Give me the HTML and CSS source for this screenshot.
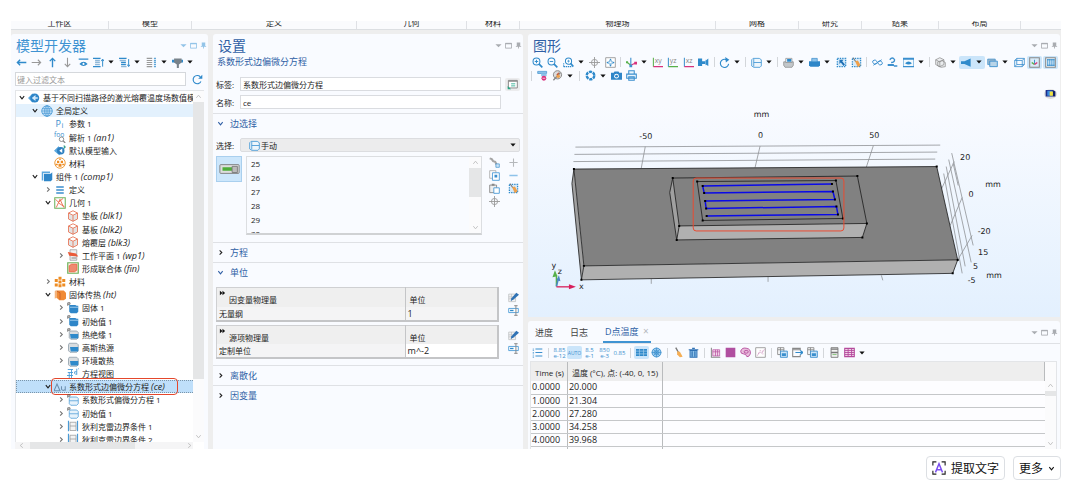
FILE: index.html
```html
<!DOCTYPE html>
<html lang="zh-CN">
<head>
  <meta charset="UTF-8" />
  <meta name="viewport" content="width=device-width, initial-scale=1.0" />
  <title>模型开发器</title>
  <link rel="stylesheet" href="styles.css">
</head>
<body>
  <svg class="sprite" aria-hidden="true">
    <!-- window and navigation glyphs -->
    <symbol id="i-min" viewBox="0 0 16 16"><path d="M1 5h14l-7 7z" fill="currentColor"/></symbol>
    <symbol id="i-max" viewBox="0 0 16 16"><path d="M1 3h14v11H1z" fill="none" stroke="currentColor" stroke-width="2"/><path d="M1 2h14v3H1z" fill="currentColor"/></symbol>
    <symbol id="i-pin" viewBox="0 0 16 16"><path d="M4 1h8v8h2v2H9v4H7v-4H2V9h2z" fill="currentColor"/></symbol>
    <symbol id="i-caret" viewBox="0 0 16 16"><path d="M1 4h14l-7 8z" fill="#111"/></symbol>
    <symbol id="i-open" viewBox="0 0 16 16"><path d="M3 5l5 6 5-6" fill="none" stroke="currentColor" stroke-width="2.5"/></symbol>
    <symbol id="i-shut" viewBox="0 0 16 16"><path d="M6 3l5 5-5 5" fill="none" stroke="currentColor" stroke-width="2.5"/></symbol>
    <symbol id="i-up" viewBox="0 0 16 16"><path d="M3 11l5-6 5 6" fill="none" stroke="currentColor" stroke-width="2"/></symbol>
    <symbol id="i-left" viewBox="0 0 16 16"><path d="M2 8h13M6 4L2 8l4 4" fill="none" stroke="#2f8acb" stroke-width="2"/></symbol>
    <symbol id="i-right" viewBox="0 0 16 16"><path d="M1 8h13M10 4l4 4-4 4" fill="none" stroke="#999" stroke-width="1.6"/></symbol>
    <symbol id="i-north" viewBox="0 0 16 16"><path d="M8 2v13M4 6l4-4 4 4" fill="none" stroke="#2f8acb" stroke-width="2"/></symbol>
    <symbol id="i-south" viewBox="0 0 16 16"><path d="M8 1v13M4 10l4 4 4-4" fill="none" stroke="#999" stroke-width="1.6"/></symbol>
    <symbol id="i-show" viewBox="0 0 16 16"><path d="M1 3h14" stroke="#2f8acb" stroke-width="2"/><path d="M2 10q6-6 12 0-6 6-12 0z" fill="#2f8acb"/><circle cx="8" cy="10" r="1.5" fill="#fff"/></symbol>
    <symbol id="i-listup" viewBox="0 0 16 16"><path d="M0 2h11M0 14h11" stroke="#2f8acb" stroke-width="2"/><path d="M3 5h7M3 8h7M3 11h7" stroke="#8fb8d8" stroke-width="2"/><path d="M14 14V4M12 6l2-3 2 3" fill="none" stroke="#2f8acb" stroke-width="1.4"/></symbol>
    <symbol id="i-listdown" viewBox="0 0 16 16"><path d="M0 2h11M3 8h7M3 11h7" stroke="#2f8acb" stroke-width="2"/><path d="M1 5h9M3 14h8" stroke="#8fb8d8" stroke-width="2"/><path d="M14 3v10M12 11l2 3 2-3" fill="none" stroke="#2f8acb" stroke-width="1.4"/></symbol>
    <symbol id="i-cols" viewBox="0 0 16 16"><path d="M1 2h8M1 5h8M1 8h8M1 11h8M1 14h8" stroke="#999" stroke-width="1.6"/><path d="M13 1v14" stroke="#5fa6d8" stroke-width="3" stroke-dasharray="2 1"/></symbol>
    <symbol id="i-funnel" viewBox="0 0 16 16"><path d="M0 6h16" stroke="#2f8acb" stroke-width="4"/><path d="M3 2h11v6l-4 3v5H7v-5L3 8z" fill="#78828a"/></symbol>
    <symbol id="i-refresh" viewBox="0 0 16 16"><path d="M13 11a6 6 0 1 1-1-7" fill="none" stroke="#2f8acb" stroke-width="1.7"/><path d="M15 1v6H9z" fill="#2f8acb"/></symbol>
    <!-- tree glyphs -->
    <symbol id="t-root" viewBox="0 0 16 16"><path d="M0 8l6-6 2 2-4 4 4 4-2 2z" fill="#5aa7de"/><circle cx="9" cy="8" r="6" fill="#2f86c8"/><path d="M5 8l5-4v3h3v2h-3v3z" fill="#d5eafa"/></symbol>
    <symbol id="t-globe" viewBox="0 0 16 16"><g fill="none" stroke="#4b9bd6" stroke-width="1.2"><circle cx="8" cy="8" r="7"/><ellipse cx="8" cy="8" rx="3" ry="7"/><path d="M1 8h14M2 5h12M2 11h12M8 1v14"/></g></symbol>
    <symbol id="t-pi" viewBox="0 0 16 16"><text x="2" y="12" font-size="12" fill="#3b8fce">P</text><text x="10" y="13" font-size="10" fill="#3b8fce">i</text></symbol>
    <symbol id="t-foo" viewBox="0 0 16 16"><text x="0" y="8" font-size="9" fill="#3b8fce">foo</text><circle cx="10" cy="11" r="3" fill="#fff" stroke="#888" stroke-width="1.2"/><path d="M12 13l3 3" stroke="#888" stroke-width="1.6"/></symbol>
    <symbol id="t-input" viewBox="0 0 16 16"><path d="M0 9l6-6 3 3-3 3 4 3-3 3z" fill="#5aa7de"/><circle cx="9" cy="9" r="5" fill="#2f80c0"/><path d="M10 1h3v6l3-3-3-3" fill="#3ba08c"/><path d="M7 9l4-3v6z" fill="#fff"/></symbol>
    <symbol id="t-matglobe" viewBox="0 0 16 16"><circle cx="8" cy="8" r="7" fill="#fff" stroke="#ee9a3a" stroke-width="1.3"/><path d="M4 5h3v3H4zM9 5h3v3H9zM6 9h4v4H6zM2 9h3v2H2zM11 9h3v2h-3zM7 2h2v2H7z" fill="#ee8c22"/></symbol>
    <symbol id="t-comp" viewBox="0 0 16 16"><path d="M1 2h11v2H3v10H1z" fill="#5aa7de"/><path d="M4 5h9l2-2v10l-2 2H4z" fill="#2f86c8"/></symbol>
    <symbol id="t-def" viewBox="0 0 16 16"><path d="M3 4h10M3 8h10M3 12h10" stroke="#3b8fce" stroke-width="2.2"/></symbol>
    <symbol id="t-geom" viewBox="0 0 16 16"><path d="M1 1h14v14H1z" fill="#fff" stroke="#6db35c" stroke-width="1.4"/><path d="M2 3l4 4 6-5M8 3l-5 11M8 3l5 11M6 8l8 5" fill="none" stroke="#ea6a4b" stroke-width="1.2"/></symbol>
    <symbol id="t-block" viewBox="0 0 16 16"><path d="M2 4l6 3 6-3v8l-6 4-6-4z" fill="#e3e3e3"/><path d="M2 4l6-3 6 3v8l-6 3-6-3zM2 4l6 3 6-3M8 7v8" fill="none" stroke="#e8795c" stroke-width="1.2"/></symbol>
    <symbol id="t-plane" viewBox="0 0 16 16"><path d="M4 1h9v14H4z" fill="#eee" stroke="#999"/><path d="M1 4l11 2 3 4-12-1z" fill="#ea5a38"/><path d="M6 12h6" stroke="#666"/></symbol>
    <symbol id="t-fin" viewBox="0 0 16 16"><path d="M1 1h14v14H1z" fill="#ffe9e0" stroke="#6db35c" stroke-width="1.6"/><path d="M3 5l3-2h7v8l-3 2H3z" fill="#ef8a70" stroke="#ea5a38"/></symbol>
    <symbol id="t-mat" viewBox="0 0 16 16"><path d="M6 1h4v4H6zM1 4h4v4H1zM11 4h4v4h-4zM6 6h4v4H6zM1 10h4v4H1zM11 10h4v4h-4zM6 11h4v4H6z" fill="#ee8c22"/></symbol>
    <symbol id="t-heat" viewBox="0 0 16 16"><path d="M1 3q2-3 4 0v10q-2-2-4 0z" fill="#f4b27a"/><path d="M4 2h9l3 3v8l-3 2H7L4 12z" fill="#f08a35"/><path d="M4 3l4 2v9" fill="none" stroke="#c2592a"/></symbol>
    <symbol id="t-dom" viewBox="0 0 16 16"><path d="M3 4h8l2 1h2v8l-2 2H5l-2-2z" fill="#2f86c8"/><path d="M4 7h11" stroke="#bcdcf3"/><path d="M1 5V1h3v2H1" fill="none" stroke="#555"/></symbol>
    <symbol id="t-bnd" viewBox="0 0 16 16"><path d="M3 3h10l2 2v8l-2 2H4l-2-2V5z" fill="#d9dde0" stroke="#8a9aa6"/><path d="M4 8h11v6H5z" fill="#2f8acb"/></symbol>
    <symbol id="t-dbnd" viewBox="0 0 16 16"><path d="M4 4h9l2 2v7l-2 2H5l-2-2V6z" fill="#d9dde0" stroke="#8a9aa6"/><path d="M4 8h11v6H5z" fill="#2f8acb"/><path d="M1 5V1h3v2H1" fill="none" stroke="#555"/></symbol>
    <symbol id="t-eq" viewBox="0 0 16 16"><path d="M1 2h7M1 6h7M0 10h8M1 14h7M6 2v12M3 6v8" stroke="#4b9bd6" stroke-width="1.2" fill="none"/><path d="M13 1v8M13 5q-4-1-3 2 1 2 3 1M15 1h1" stroke="#4b9bd6" stroke-width="1.2" fill="none"/></symbol>
    <symbol id="t-pde" viewBox="0 0 16 16"><path d="M0 13L4 4l4 9z" fill="none" stroke="#6c8fae" stroke-width="1.4"/><path d="M10 7v4q2 3 5 0V7v6" fill="none" stroke="#6c8fae" stroke-width="1.4"/></symbol>
    <symbol id="t-coef" viewBox="0 0 16 16"><path d="M4 4h9l2 2v7l-2 2H5l-2-2V6zM3 9h12" fill="#e6f2fb" stroke="#4b9bd6"/><path d="M1 5V1h3v2H1" fill="none" stroke="#555"/></symbol>
    <symbol id="t-dir" viewBox="0 0 16 16"><path d="M4 3h8v11H4zM4 8h8" fill="#f3f3f3" stroke="#999"/><path d="M2 1v14M14 1v14" stroke="#4b9bd6" stroke-width="1.6"/></symbol>
    <!-- settings glyphs -->
    <symbol id="s-note" viewBox="0 0 16 16"><path d="M2 2h13v11H2z" fill="#fff" stroke="#888" stroke-width="1.4"/><path d="M2 3h13" stroke="#888" stroke-width="2"/><path d="M6 7h6M6 10h6" stroke="#3fb59b" stroke-width="1.4"/><path d="M1 15v-5l5 5z" fill="#27a585"/></symbol>
    <symbol id="s-edge" viewBox="0 0 16 16"><path d="M3 2h9l3 2v9l-2 2H4l-3-2V4zM4 3v11M4 8h11" fill="#eef6fc" stroke="#4b9bd6" stroke-width="1.3"/></symbol>
    <symbol id="s-switch" viewBox="0 0 24 16"><rect x="1" y="3" width="22" height="10" rx="1" fill="#ddd" stroke="#777"/><path d="M4 6h11v4H4z" fill="#4ead3a"/><path d="M15 5h6v7h-6z" fill="#bbb" stroke="#777"/></symbol>
    <symbol id="s-link" viewBox="0 0 16 16"><path d="M1 2l3 1 2 3 3 1 2 4" stroke="#a5a5a5" stroke-width="3" fill="none"/><path d="M10 10h5v5h-5z" fill="#cfe6f7" stroke="#3b8fce"/></symbol>
    <symbol id="s-plus" viewBox="0 0 16 16"><path d="M8 2v12M2 8h12" stroke="#b5b8bb" stroke-width="1.6"/></symbol>
    <symbol id="s-minus" viewBox="0 0 16 16"><path d="M2 8h12" stroke="#8fc3ea" stroke-width="2.4"/></symbol>
    <symbol id="s-copy" viewBox="0 0 16 16"><path d="M1 1h9v11H1z" fill="#fff" stroke="#999"/><path d="M5 4h10v11H5z" fill="#fff" stroke="#4b9bd6" stroke-width="1.3"/><path d="M8 7h4v4H8z" fill="#3b8fce"/></symbol>
    <symbol id="s-paste" viewBox="0 0 16 16"><path d="M1 3h10v11H1z" fill="#eee" stroke="#888" stroke-width="1.3"/><path d="M4 1h4v3H4z" fill="#888"/><path d="M7 7h8v8H7z" fill="#fff" stroke="#4b9bd6" stroke-width="1.3"/></symbol>
    <symbol id="s-brush" viewBox="0 0 16 16"><path d="M2 2h12v12H2z" fill="#d5eafa" stroke="#2f8acb" stroke-width="1.8" stroke-dasharray="2 1.5"/><path d="M3 1l4 6" stroke="#777" stroke-width="1.6"/><path d="M6 6l4-1 4 7-4 3z" fill="#f0a04a"/></symbol>
    <symbol id="s-target" viewBox="0 0 16 16"><path d="M8 0v16M0 8h16" stroke="#999" stroke-width="1.3"/><circle cx="8" cy="8" r="4.500" fill="none" stroke="#999" stroke-width="1.3"/></symbol>
    <symbol id="s-pen" viewBox="0 0 16 16"><path d="M1 3h10v11H1zM1 7h10M1 10h10M5 3v11" fill="#f3f3f3" stroke="#b9bcbf"/><path d="M4 13l1-4 7-8 4 3-8 7z" fill="#2f72b5"/></symbol>
    <symbol id="s-field" viewBox="0 0 16 16"><path d="M1 5h14v6H1z" fill="#fff" stroke="#4b9bd6" stroke-width="1.3"/><path d="M3 7h5v2H3z" fill="#2f8acb"/><path d="M9 1h5M9 15h5M11.500 1v14" stroke="#888" stroke-width="1.4"/></symbol>
    <symbol id="s-ff" viewBox="0 0 16 16"><path d="M1 2l7 6-7 6zM8 2l7 6-7 6z" fill="#111"/></symbol>
    <!-- graphics glyphs -->
    <symbol id="g-zin" viewBox="0 0 16 16"><circle cx="6.500" cy="6.500" r="5" fill="none" stroke="#2f8acb" stroke-width="1.500"/><path d="M10 10l5 5" stroke="#2f8acb" stroke-width="2.400"/><path d="M4 6.500h5M6.500 4v5" stroke="#2f8acb" stroke-width="1.400"/></symbol>
    <symbol id="g-zout" viewBox="0 0 16 16"><circle cx="6.500" cy="6.500" r="5" fill="none" stroke="#2f8acb" stroke-width="1.500"/><path d="M10 10l5 5" stroke="#2f8acb" stroke-width="2.400"/><path d="M4 6.500h5" stroke="#2f8acb" stroke-width="1.400"/></symbol>
    <symbol id="g-zbox" viewBox="0 0 16 16"><path d="M1 14V8M1 14h11" stroke="#2f8acb" stroke-dasharray="2 1" stroke-width="1.500"/><circle cx="8" cy="6" r="4.500" fill="#fff" stroke="#2f8acb" stroke-width="1.500"/><path d="M11 9l4 5" stroke="#2f8acb" stroke-width="2.400"/><path d="M6 6h4M8 4v4" stroke="#2f8acb"/></symbol>
    <symbol id="g-fit" viewBox="0 0 16 16"><path d="M1 1h14v14H1z" fill="#fff" stroke="#999" stroke-width="1.300"/><path d="M6 5l2-3 2 3zM6 11l2 3 2-3zM5 6L2 8l3 2zM11 6l3 2-3 2z" fill="#2f8acb"/><path d="M6 6h4v4H6z" fill="none" stroke="#2f8acb" stroke-dasharray="2 1"/></symbol>
    <symbol id="g-axes" viewBox="0 0 16 16"><path d="M7 11V1" stroke="#3b8fce" stroke-width="1.600"/><path d="M7 12L2 8" stroke="#57b04a" stroke-width="1.600"/><path d="M7 12l6-3" stroke="#d9327c" stroke-width="1.600"/><path d="M12 7h4v4h-4z" fill="#d9327c"/><path d="M0 6h3v3H0z" fill="#57b04a"/><path d="M5 11h4v4H5z" fill="#3b8fce"/></symbol>
    <symbol id="g-xy" viewBox="0 0 16 16"><path d="M2 1v13" stroke="#57b04a" stroke-width="1.500"/><path d="M2 14h14" stroke="#d9327c" stroke-width="1.500"/><text x="4" y="9" font-size="10" fill="#888">xy</text></symbol>
    <symbol id="g-yz" viewBox="0 0 16 16"><path d="M2 1v13" stroke="#3b8fce" stroke-width="1.500"/><path d="M2 14h14" stroke="#57b04a" stroke-width="1.500"/><text x="4" y="9" font-size="10" fill="#888">yz</text></symbol>
    <symbol id="g-xz" viewBox="0 0 16 16"><path d="M2 1v13" stroke="#3b8fce" stroke-width="1.500"/><path d="M2 14h14" stroke="#d9327c" stroke-width="1.500"/><text x="4" y="9" font-size="10" fill="#888">xz</text></symbol>
    <symbol id="g-mirror" viewBox="0 0 16 16"><path d="M0 2h6v4h4l5-4v11l-5-3H6v3H0z" fill="#2f8acb"/><path d="M11 4v8" stroke="#9cc9ec"/></symbol>
    <symbol id="g-rot" viewBox="0 0 16 16"><path d="M11 4a6 6 0 1 0 3 6" fill="none" stroke="#2f8acb" stroke-width="1.600"/><path d="M9 0l6 4-5 4z" fill="#2f8acb"/></symbol>
    <symbol id="g-hide" viewBox="0 0 16 16"><path d="M1 7h14v5l-2 3H3l-2-3z" fill="#c3c7ca" stroke="#888"/><path d="M4 2h9v6H4z" fill="#eef6fc" stroke="#888"/><path d="M6 3h6v4H6z" fill="#2f8acb"/></symbol>
    <symbol id="g-show" viewBox="0 0 16 16"><path d="M0 6h16v6l-2 2H2l-2-2z" fill="#2f86c8"/><path d="M4 2h8v5H4z" fill="#8fc3ea" stroke="#2f86c8"/></symbol>
    <symbol id="g-sel" viewBox="0 0 16 16"><path d="M2 2h12v12H2z" fill="#d5eafa" stroke="#2f8acb" stroke-width="2" stroke-dasharray="2 1.500"/><path d="M5 4h6L9 6l4 5-2 2-4-5-2 2z" fill="#1f70b5"/></symbol>
    <symbol id="g-chain" viewBox="0 0 16 16"><path d="M1 6q4-4 7 2t7 2M1 6q0 5 5 4l4-4q5-1 5 4M2 12L14 4" fill="none" stroke="#3b8fce" stroke-width="1.400"/></symbol>
    <symbol id="g-person" viewBox="0 0 16 16"><path d="M4 4q4-5 7 0 0 4-5 4" fill="none" stroke="#3b8fce" stroke-width="2"/><path d="M1 10h9v3H1zM10 12h5v2h-5" fill="#3b8fce"/></symbol>
    <symbol id="g-eyebox" viewBox="0 0 16 16"><path d="M0 2h16v12H0z" fill="#f3f9fd" stroke="#3b8fce" stroke-width="1.500"/><path d="M0 3h16" stroke="#3b8fce" stroke-width="2"/><path d="M3 9q5-5 10 0-5 4-10 0z" fill="#2f8acb"/></symbol>
    <symbol id="g-trans" viewBox="0 0 16 16"><path d="M1 4l6-3 6 3v7l-6 3-6-3zM1 4l6 3 6-3M7 7v7M4 7l6-2 5 3v6l-6 1-5-2z" fill="#eaecee" stroke="#888"/></symbol>
    <symbol id="g-light" viewBox="0 0 16 16"><path d="M0 6h5l9-4v12l-9-4H0z" fill="#2f8acb"/></symbol>
    <symbol id="g-scene" viewBox="0 0 16 16"><path d="M1 3h11v8H1z" fill="#9cb8cc" stroke="#3b8fce"/><path d="M4 6h11v8H4z" fill="#b8d4e8" stroke="#3b8fce" stroke-width="1.300"/></symbol>
    <symbol id="g-wire" viewBox="0 0 16 16"><path d="M1 5h11v9H1zM4 2h11v9H4zM1 5l3-3M12 5l3-3M1 14l3-3M12 14l3-3" fill="none" stroke="#3b8fce" stroke-width="1.200"/></symbol>
    <symbol id="g-axbox" viewBox="0 0 16 16"><path d="M1 1h14v14H1z" fill="#d9ebf8" stroke="#888" stroke-width="1.500"/><path d="M8 10V4" stroke="#3b8fce" stroke-width="1.400"/><path d="M8 11L4 8" stroke="#57b04a" stroke-width="2"/><path d="M8 11l4-3" stroke="#d9327c" stroke-width="2"/></symbol>
    <symbol id="g-gridbox" viewBox="0 0 16 16"><path d="M1 1h14v14H1z" fill="#eaf5fd" stroke="#888" stroke-width="1.500"/><path d="M4 3v10M7 3v10M10 3v10M13 3v10M3 4h11M3 12h11" stroke="#2f8acb" stroke-width="1.300"/></symbol>
    <symbol id="g-clip" viewBox="0 0 16 16"><path d="M1 2h13v3H1z" fill="#8fc3ea" stroke="#3b8fce"/><path d="M6 5h8v4H6z" fill="#8fc3ea"/><circle cx="10" cy="12" r="3.500" fill="#d9327c"/><path d="M8 12h4" stroke="#fff"/></symbol>
    <symbol id="g-palette" viewBox="0 0 16 16"><circle cx="8" cy="7" r="6" fill="#ddd" stroke="#888" stroke-width="1.400"/><path d="M2 15L12 4" stroke="#888" stroke-width="2"/><circle cx="9" cy="9" r="2.500" fill="#f0a04a"/><path d="M7 7l3-3" stroke="#c5401f" stroke-width="1.500"/></symbol>
    <symbol id="g-shutter" viewBox="0 0 16 16"><circle cx="8" cy="8" r="5.500" fill="none" stroke="#2f8acb" stroke-width="3.500" stroke-dasharray="4.500 1.250"/></symbol>
    <symbol id="g-camera" viewBox="0 0 16 16"><path d="M0 4h4l1-2h6l1 2h4v10H0z" fill="#2f86c8"/><circle cx="8" cy="9" r="3.400" fill="#fff"/><circle cx="8" cy="9" r="2" fill="#2f86c8"/></symbol>
    <symbol id="g-print" viewBox="0 0 16 16"><path d="M4 1h8v5H4zM1 6h14v6H1zM4 10h8v5H4z" fill="#eaf5fd" stroke="#3b8fce" stroke-width="1.500"/></symbol>
    <symbol id="g-cube" viewBox="0 0 16 16"><ellipse cx="8" cy="9" rx="8" ry="6" fill="#ddd"/><path d="M2 4h9v8H2z" fill="#1c2e8c"/><path d="M4 5h6v6H4z" fill="#3b8be0"/><path d="M7 6h5v5H7z" fill="#f0e040"/><path d="M11 4l3 2v6h-3z" fill="#10206a"/></symbol>
    <!-- table glyphs -->
    <symbol id="r-list" viewBox="0 0 16 16"><path d="M5 3h10M5 8h10M5 13h10" stroke="#3b8fce" stroke-width="1.500"/><path d="M1 3h2M1 5h2M1 8h2M1 10h2M1 13h2M1 15h2" stroke="#3b8fce"/></symbol>
    <symbol id="r-table" viewBox="0 0 16 16"><path d="M0 3h16v10H0z" fill="#2f8acb"/><path d="M0 6h16M0 10h16M5 3v10M11 3v10" stroke="#a9d0ee"/></symbol>
    <symbol id="r-wheel" viewBox="0 0 16 16"><circle cx="8" cy="8" r="6.500" fill="#9ccbee" stroke="#3b8fce" stroke-width="1.300"/><path d="M8 1v14M1 8h14M3 3l10 10M13 3L3 13" stroke="#3b8fce"/><circle cx="8" cy="8" r="3" fill="none" stroke="#3b8fce"/></symbol>
    <symbol id="r-broom" viewBox="0 0 16 16"><path d="M4 1l4 7" stroke="#777" stroke-width="2"/><path d="M6 6l4 1 4 7-4 1-4-4z" fill="#f5ae55"/></symbol>
    <symbol id="r-bin" viewBox="0 0 16 16"><path d="M3 5h10v10H3z" fill="#8fc3ea" stroke="#2f72b5" stroke-width="1.500"/><path d="M1 4h14M6 2h4M6 6v8M10 6v8" stroke="#2f72b5" stroke-width="1.800"/></symbol>
    <symbol id="r-plot" viewBox="0 0 16 16"><path d="M2 1v14h13" stroke="#888" stroke-width="1.500" fill="none"/><path d="M4 4h10v9H4z" fill="#f2d6ea" stroke="#b54a9c"/><path d="M4 7h10M8 4v9M11 4v9" stroke="#b54a9c"/></symbol>
    <symbol id="r-fill" viewBox="0 0 16 16"><path d="M1 1h14v14H1z" fill="#b04fa0"/></symbol>
    <symbol id="r-contour" viewBox="0 0 16 16"><path d="M1 6q2-6 9-4 6 1 5 8-2 5-5 4-1-4-5-4-4 0-4-4z" fill="#e9bedd" stroke="#b54a9c" stroke-width="1.300"/><ellipse cx="9" cy="7" rx="3" ry="2" fill="none" stroke="#b54a9c" stroke-width="1.300"/></symbol>
    <symbol id="r-chart" viewBox="0 0 16 16"><path d="M1 1h14v14H1z" fill="#fff" stroke="#999" stroke-width="1.300"/><path d="M3 13l4-6 3 2 4-6" fill="none" stroke="#d3a0c8"/><path d="M7 5h1M10 6h1M11 10h1M5 9h1" stroke="#b54a9c"/></symbol>
    <symbol id="r-copy" viewBox="0 0 16 16"><path d="M1 1h9v10H1zM1 4h9M5 1v10" fill="#fff" stroke="#888" stroke-width="1.300"/><path d="M5 6h10v9H5z" fill="#cfe6f7" stroke="#3b8fce" stroke-width="1.300"/><path d="M7 9h6v4H7z" fill="#3b8fce"/></symbol>
    <symbol id="r-export" viewBox="0 0 16 16"><path d="M12 5V2H1v12h11v-3M1 4h11" fill="none" stroke="#888" stroke-width="1.500"/><path d="M5 8h10M12 5l4 3-4 3" fill="none" stroke="#2f8acb" stroke-width="1.600"/></symbol>
    <symbol id="r-doc" viewBox="0 0 16 16"><path d="M3 1h10v14H3z" fill="#f3f3f3" stroke="#777" stroke-width="1.300"/><path d="M3 3h10M3 8h10" stroke="#777" stroke-width="2"/><path d="M5 11h6" stroke="#57b04a"/></symbol>
    <symbol id="r-grid" viewBox="0 0 16 16"><path d="M1 2h14v12H1z" fill="#f2d6ea" stroke="#b54a9c" stroke-width="1.500"/><path d="M1 5h14M1 8h14M1 11h14M6 2v12M11 2v12" stroke="#b54a9c" stroke-width="1.300"/></symbol>
    <symbol id="b-scan" viewBox="0 0 16 16"><path d="M5 1H1v4M11 1h4v4M5 15H1v-4M11 15h4v-4" fill="none" stroke="#222" stroke-width="1.300"/><path d="M4 13L8 3l4 10M5.500 10h5" fill="none" stroke="#7a4df0" stroke-width="1.600"/></symbol>
  </svg>

  <div class="app">
    <div class="ribbon">
      <span>工作区</span><span>模型</span><span>定义</span><span>几何</span><span>材料</span><span>物理场</span><span>网格</span><span>研究</span><span>结果</span><span>布局</span><span></span>
    </div>

    <div class="workspace">
      <!-- model tree -->
      <section class="panel builder">
        <header class="panel-head">
          <h2>模型开发器</h2>
          <div class="win"><svg><use href="#i-min"/></svg><svg><use href="#i-max"/></svg><svg><use href="#i-pin"/></svg></div>
        </header>
        <div class="toolbar builder-bar">
          <button class="tb" aria-label="后退"><svg><use href="#i-left"/></svg></button>
          <button class="tb" aria-label="前进"><svg><use href="#i-right"/></svg></button>
          <button class="tb" aria-label="上移"><svg><use href="#i-north"/></svg></button>
          <button class="tb" aria-label="下移"><svg><use href="#i-south"/></svg></button>
          <button class="tb" aria-label="显示"><svg><use href="#i-show"/></svg></button>
          <button class="tb menu" aria-label="折叠"><svg><use href="#i-listup"/></svg><svg class="caret"><use href="#i-caret"/></svg></button>
          <button class="tb menu" aria-label="展开"><svg><use href="#i-listdown"/></svg><svg class="caret"><use href="#i-caret"/></svg></button>
          <button class="tb menu" aria-label="列"><svg><use href="#i-cols"/></svg><svg class="caret"><use href="#i-caret"/></svg></button>
          <button class="tb menu" aria-label="筛选"><svg><use href="#i-funnel"/></svg><svg class="caret"><use href="#i-caret"/></svg></button>
        </div>
        <div class="filter">
          <input type="text" placeholder="键入过滤文本" aria-label="键入过滤文本">
          <button class="tb" aria-label="刷新"><svg><use href="#i-refresh"/></svg></button>
        </div>
        <div class="tree-box">
          <div class="tree-view">
            <ul class="tree">
              <li class="l0"><svg class="chev"><use href="#i-open"/></svg><svg><use href="#t-root"/></svg><span>基于不同扫描路径的激光熔覆温度场数值模</span></li>
              <li class="l1 hover"><svg class="chev"><use href="#i-open"/></svg><svg><use href="#t-globe"/></svg><span>全局定义</span></li>
              <li class="l2"><i class="chev"></i><svg><use href="#t-pi"/></svg><span>参数 1</span></li>
              <li class="l2"><i class="chev"></i><svg><use href="#t-foo"/></svg><span>解析 1 <em>(an1)</em></span></li>
              <li class="l2"><i class="chev"></i><svg><use href="#t-input"/></svg><span>默认模型输入</span></li>
              <li class="l2"><i class="chev"></i><svg><use href="#t-matglobe"/></svg><span>材料</span></li>
              <li class="l1"><svg class="chev"><use href="#i-open"/></svg><svg><use href="#t-comp"/></svg><span>组件 1 <em>(comp1)</em></span></li>
              <li class="l2"><svg class="chev shut"><use href="#i-shut"/></svg><svg><use href="#t-def"/></svg><span>定义</span></li>
              <li class="l2"><svg class="chev"><use href="#i-open"/></svg><svg><use href="#t-geom"/></svg><span>几何 1</span></li>
              <li class="l3"><i class="chev"></i><svg><use href="#t-block"/></svg><span>垫板 <em>(blk1)</em></span></li>
              <li class="l3"><i class="chev"></i><svg><use href="#t-block"/></svg><span>基板 <em>(blk2)</em></span></li>
              <li class="l3"><i class="chev"></i><svg><use href="#t-block"/></svg><span>熔覆层 <em>(blk3)</em></span></li>
              <li class="l3"><svg class="chev shut"><use href="#i-shut"/></svg><svg><use href="#t-plane"/></svg><span>工作平面 1 <em>(wp1)</em></span></li>
              <li class="l3"><i class="chev"></i><svg><use href="#t-fin"/></svg><span>形成联合体 <em>(fin)</em></span></li>
              <li class="l2"><svg class="chev shut"><use href="#i-shut"/></svg><svg><use href="#t-mat"/></svg><span>材料</span></li>
              <li class="l2"><svg class="chev"><use href="#i-open"/></svg><svg><use href="#t-heat"/></svg><span>固体传热 <em>(ht)</em></span></li>
              <li class="l3"><svg class="chev shut"><use href="#i-shut"/></svg><svg><use href="#t-dom"/></svg><span>固体 1</span></li>
              <li class="l3"><svg class="chev shut"><use href="#i-shut"/></svg><svg><use href="#t-dom"/></svg><span>初始值 1</span></li>
              <li class="l3"><svg class="chev shut"><use href="#i-shut"/></svg><svg><use href="#t-dbnd"/></svg><span>热绝缘 1</span></li>
              <li class="l3"><svg class="chev shut"><use href="#i-shut"/></svg><svg><use href="#t-bnd"/></svg><span>高斯热源</span></li>
              <li class="l3"><svg class="chev shut"><use href="#i-shut"/></svg><svg><use href="#t-bnd"/></svg><span>环境散热</span></li>
              <li class="l3"><i class="chev"></i><svg><use href="#t-eq"/></svg><span>方程视图</span></li>
              <li class="l2 selected"><svg class="chev"><use href="#i-open"/></svg><svg><use href="#t-pde"/></svg><span>系数形式边偏微分方程 <em>(ce)</em></span><b class="mark"></b></li>
              <li class="l3"><svg class="chev shut"><use href="#i-shut"/></svg><svg><use href="#t-coef"/></svg><span>系数形式偏微分方程 1</span></li>
              <li class="l3"><svg class="chev shut"><use href="#i-shut"/></svg><svg><use href="#t-coef"/></svg><span>初始值 1</span></li>
              <li class="l3"><svg class="chev shut"><use href="#i-shut"/></svg><svg><use href="#t-dir"/></svg><span>狄利克雷边界条件 1</span></li>
              <li class="l3"><svg class="chev shut"><use href="#i-shut"/></svg><svg><use href="#t-dir"/></svg><span>狄利克雷边界条件 2</span></li>
            </ul>
          </div>
          <div class="vbar"><svg><use href="#i-up"/></svg><span class="thumb"></span><svg class="down"><use href="#i-up"/></svg></div>
          <div class="hbar"><svg class="west"><use href="#i-up"/></svg><span class="thumb"></span><svg class="east"><use href="#i-up"/></svg></div>
        </div>
      </section>

      <!-- settings -->
      <section class="panel settings">
        <header class="panel-head">
          <h2>设置</h2>
          <div class="win"><svg><use href="#i-min"/></svg><svg><use href="#i-max"/></svg><svg><use href="#i-pin"/></svg></div>
        </header>
        <p class="subtitle">系数形式边偏微分方程</p>
        <div class="form">
          <label for="f-label">标签:</label>
          <input id="f-label" type="text" value="系数形式边偏微分方程">
          <button class="tb note" aria-label="备注"><svg><use href="#s-note"/></svg></button>
          <label for="f-name">名称:</label>
          <input id="f-name" type="text" value="ce">
        </div>
        <h3 class="section"><svg><use href="#i-open"/></svg>边选择</h3>
        <div class="pick">
          <label for="f-sel">选择:</label>
          <div class="combo">
            <svg class="lead"><use href="#s-edge"/></svg>
            <select id="f-sel"><option>手动</option></select>
            <svg class="caret"><use href="#i-caret"/></svg>
          </div>
        </div>
        <div class="edges">
          <button class="switch" aria-label="激活选择"><svg><use href="#s-switch"/></svg></button>
          <div class="listbox">
            <select size="6" aria-label="边">
              <option>25</option><option>26</option><option>27</option><option>28</option><option>29</option><option>30</option>
            </select>
            <div class="vbar"><svg><use href="#i-up"/></svg><span class="thumb"></span><svg class="down"><use href="#i-up"/></svg></div>
          </div>
          <div class="edge-tools">
            <button class="tb" aria-label="创建选择"><svg><use href="#s-link"/></svg></button>
            <button class="tb" aria-label="添加"><svg><use href="#s-plus"/></svg></button>
            <button class="tb" aria-label="复制"><svg><use href="#s-copy"/></svg></button>
            <button class="tb" aria-label="移除"><svg><use href="#s-minus"/></svg></button>
            <button class="tb" aria-label="粘贴"><svg><use href="#s-paste"/></svg></button>
            <button class="tb" aria-label="清除"><svg><use href="#s-brush"/></svg></button>
            <button class="tb" aria-label="缩放"><svg><use href="#s-target"/></svg></button>
          </div>
        </div>
        <h3 class="section"><svg class="dark"><use href="#i-shut"/></svg>方程</h3>
        <h3 class="section"><svg><use href="#i-open"/></svg>单位</h3>
        <div class="units">
          <table>
            <tr><th><svg><use href="#s-ff"/></svg>因变量物理量</th><th>单位</th></tr>
            <tr><td>无量纲</td><td>1</td></tr>
          </table>
          <div class="unit-tools">
            <button class="tb" aria-label="选择物理量"><svg><use href="#s-pen"/></svg></button>
            <button class="tb" aria-label="定义单位"><svg><use href="#s-field"/></svg></button>
          </div>
          <table>
            <tr><th><svg><use href="#s-ff"/></svg>源项物理量</th><th>单位</th></tr>
            <tr><td>定制单位</td><td class="edit">m^-2</td></tr>
          </table>
          <div class="unit-tools">
            <button class="tb" aria-label="选择物理量"><svg><use href="#s-pen"/></svg></button>
            <button class="tb" aria-label="定义单位"><svg><use href="#s-field"/></svg></button>
          </div>
        </div>
        <h3 class="section"><svg class="dark"><use href="#i-shut"/></svg>离散化</h3>
        <h3 class="section"><svg class="dark"><use href="#i-shut"/></svg>因变量</h3>
      </section>

      <div class="right">
        <!-- graphics -->
        <section class="panel graphics">
          <header class="panel-head">
            <h2>图形</h2>
            <div class="win"><svg><use href="#i-min"/></svg><svg><use href="#i-max"/></svg><svg><use href="#i-pin"/></svg></div>
          </header>
          <div class="toolbar spread">
            <button class="tb" aria-label="放大"><svg><use href="#g-zin"/></svg></button>
            <button class="tb" aria-label="缩小"><svg><use href="#g-zout"/></svg></button>
            <button class="tb menu" aria-label="框选缩放"><svg><use href="#g-zbox"/></svg><svg class="caret"><use href="#i-caret"/></svg></button>
            <button class="tb" aria-label="缩放到选择"><svg><use href="#s-target"/></svg></button>
            <button class="tb" aria-label="缩放到窗口"><svg><use href="#g-fit"/></svg></button>
            <i class="sep"></i>
            <button class="tb menu" aria-label="默认视图"><svg><use href="#g-axes"/></svg><svg class="caret"><use href="#i-caret"/></svg></button>
            <button class="tb" aria-label="xy 视图"><svg><use href="#g-xy"/></svg></button>
            <button class="tb" aria-label="yz 视图"><svg><use href="#g-yz"/></svg></button>
            <button class="tb" aria-label="xz 视图"><svg><use href="#g-xz"/></svg></button>
            <button class="tb" aria-label="镜像"><svg><use href="#g-mirror"/></svg></button>
            <i class="sep"></i>
            <button class="tb menu" aria-label="旋转"><svg><use href="#g-rot"/></svg><svg class="caret"><use href="#i-caret"/></svg></button>
            <i class="sep"></i>
            <button class="tb menu" aria-label="选择边"><svg><use href="#s-edge"/></svg><svg class="caret"><use href="#i-caret"/></svg></button>
            <i class="sep"></i>
            <button class="tb menu" aria-label="隐藏"><svg><use href="#g-hide"/></svg><svg class="caret"><use href="#i-caret"/></svg></button>
            <button class="tb menu" aria-label="显示"><svg><use href="#g-show"/></svg><svg class="caret"><use href="#i-caret"/></svg></button>
            <button class="tb" aria-label="选择框"><svg><use href="#g-sel"/></svg></button>
            <button class="tb" aria-label="取消选择"><svg><use href="#s-brush"/></svg></button>
            <i class="sep"></i>
            <button class="tb" aria-label="链接"><svg><use href="#g-chain"/></svg></button>
            <button class="tb" aria-label="重置隐藏"><svg><use href="#g-person"/></svg></button>
            <button class="tb menu" aria-label="查看"><svg><use href="#g-eyebox"/></svg><svg class="caret"><use href="#i-caret"/></svg></button>
            <i class="sep"></i>
            <button class="tb menu" aria-label="透明"><svg><use href="#g-trans"/></svg><svg class="caret"><use href="#i-caret"/></svg></button>
            <button class="tb menu on" aria-label="场景光"><svg><use href="#g-light"/></svg><svg class="caret"><use href="#i-caret"/></svg></button>
            <button class="tb menu" aria-label="环境"><svg><use href="#g-scene"/></svg><svg class="caret"><use href="#i-caret"/></svg></button>
            <button class="tb" aria-label="线框"><svg><use href="#g-wire"/></svg></button>
            <button class="tb on" aria-label="坐标轴"><svg><use href="#g-axbox"/></svg></button>
            <button class="tb on" aria-label="栅格"><svg><use href="#g-gridbox"/></svg></button>
          </div>
          <div class="toolbar second">
            <i class="sep"></i>
            <button class="tb" aria-label="裁剪"><svg><use href="#g-clip"/></svg></button>
            <button class="tb menu" aria-label="颜色"><svg><use href="#g-palette"/></svg><svg class="caret"><use href="#i-caret"/></svg></button>
            <i class="sep"></i>
            <button class="tb menu" aria-label="更新"><svg><use href="#g-shutter"/></svg><svg class="caret"><use href="#i-caret"/></svg></button>
            <button class="tb" aria-label="快照"><svg><use href="#g-camera"/></svg></button>
            <button class="tb" aria-label="打印"><svg><use href="#g-print"/></svg></button>
          </div>
          <svg class="scene" viewBox="527 83 533 234">
            <use href="#g-cube" x="1044" y="87" width="13" height="13"/>
            <!-- rear grid -->
            <g class="grid">
              <path d="M574.500 147.500L940 145.500M573.500 154.800L937 152.500M572.500 162L935 159.500M644.500 147L640.500 168.500M759.500 146.500L754.500 168M873 146L866 167.500M650.500 279.500v5M767.500 277.500v5M881 276l1.500 5"/>
              <path d="M943.500 174L962 274M946 167L965 267M948.500 160L971 263M951.500 153.500L973 246M953 164L958 186M941 190L954 162M950 226L962 198M956 263L972 236"/>
            </g>
            <!-- base plate -->
            <path d="M573 169.500L936.500 167 957.500 260.500 583 266.500z" fill="#818181"/>
            <path d="M583 266.500L957.500 260.500 952.500 274 580.500 280.500z" fill="#b0b0b0"/>
            <path d="M573 169.500L571 184 580.500 280.500 583 266.500z" fill="#a0a0a0"/>
            <path class="edge" d="M573 169.500L936.500 167 957.500 260.500 952.500 274 580.500 280.500 571 184zL583 266.500 957.500 260.500M583 266.500l-2.500 14"/>
            <!-- substrate -->
            <path d="M678.500 226.500L866.500 224 862 238 676 240.500z" fill="#b0b0b0"/>
            <path d="M672 178.500L669 193 676 240.500 678.500 226.500z" fill="#a0a0a0"/>
            <path class="edge" d="M672 178.500L857 176.500 866.500 224 862 238 676 240.500 669 193zL678.500 226.500 866.500 224M678.500 226.500l-2.500 14"/>
            <path class="edge" d="M696.500 182L835.500 181 842.500 219 702 221z"/>
            <g class="dots">
              <path d="M573 169.500h0M936.500 167h0M957.500 260.500h0M952.500 274h0M580.500 280.500h0M583 266.500h0M672 178.500h0M857 176.500h0M866.500 224h0M862 238h0M676 240.500h0M678.500 226.500h0M696.500 182h0M835.500 181h0M842.500 219h0M702 221h0"/>
            </g>
            <!-- scan path -->
            <path class="scan" d="M831.500 184.500L702 186.500 703.500 193.500 832.500 192 834.500 200 704.500 201.500 705.500 209 836 207 837.500 215 706 216.500"/>
            <path class="dots" d="M831.500 184.500h0M702 186.500h0M703.500 193.500h0M832.500 192h0M834.500 200h0M704.500 201.500h0M705.500 209h0M836 207h0M837.500 215h0M706 216.500h0"/>
            <rect class="callout" x="692.500" y="178.500" width="151" height="53" rx="3"/>
            <g class="ticks">
              <text x="761" y="117">mm</text><text x="645" y="139">-50</text><text x="760" y="138.500">0</text><text x="874" y="138">50</text>
              <text x="965" y="160">20</text><text x="993" y="187">mm</text><text x="971" y="197">0</text><text x="984" y="235">-20</text><text x="983" y="256">15</text><text x="975.500" y="269.500">5</text><text x="994" y="278.500">mm</text><text x="971.500" y="284">-5</text>
              <text x="553" y="269">y</text><text x="559" y="275">z</text><text x="580.500" y="290">x</text>
            </g>
            <!-- axis triad -->
            <path d="M555.500 287V276" stroke="#57b04a" stroke-width="1.500"/><path d="M551.500 278l2.500-7 2.500 6z" fill="#57b04a"/>
            <path d="M555.500 287l2-8" stroke="#4a86c4" stroke-width="1.500"/><path d="M555.500 281l2.500-5 1.500 6z" fill="#4a86c4"/>
            <path d="M555.500 287.500h14" stroke="#d81e5b" stroke-width="1.300"/><path d="M568 285l7 2.500-7 2.500z" fill="#d81e5b"/>
          </svg>
        </section>

        <!-- results table -->
        <section class="panel results">
          <header class="tabs">
            <button class="tab">进度</button>
            <button class="tab">日志</button>
            <button class="tab active">D点温度 <span>×</span></button>
            <div class="win"><svg><use href="#i-min"/></svg><svg><use href="#i-max"/></svg><svg><use href="#i-pin"/></svg></div>
          </header>
          <div class="toolbar table-bar">
            <button class="tb" aria-label="列表"><svg><use href="#r-list"/></svg></button>
            <i class="sep"></i>
            <button class="tb num">8.85<br>e-12</button>
            <button class="tb num on auto">AUTO</button>
            <button class="tb num">8.5<br>e-1</button>
            <button class="tb num">850<br>e-3</button>
            <button class="tb num">0.85</button>
            <i class="sep"></i>
            <button class="tb on" aria-label="表格"><svg><use href="#r-table"/></svg></button>
            <button class="tb" aria-label="极坐标"><svg><use href="#r-wheel"/></svg></button>
            <i class="sep"></i>
            <button class="tb" aria-label="清除"><svg><use href="#r-broom"/></svg></button>
            <button class="tb" aria-label="删除"><svg><use href="#r-bin"/></svg></button>
            <i class="sep"></i>
            <button class="tb" aria-label="表图"><svg><use href="#r-plot"/></svg></button>
            <button class="tb" aria-label="表面"><svg><use href="#r-fill"/></svg></button>
            <button class="tb" aria-label="等值线"><svg><use href="#r-contour"/></svg></button>
            <button class="tb" aria-label="图表"><svg><use href="#r-chart"/></svg></button>
            <i class="sep"></i>
            <button class="tb" aria-label="复制"><svg><use href="#r-copy"/></svg></button>
            <button class="tb" aria-label="导出"><svg><use href="#r-export"/></svg></button>
            <button class="tb" aria-label="复制表"><svg><use href="#r-copy"/></svg></button>
            <i class="sep"></i>
            <button class="tb" aria-label="报告"><svg><use href="#r-doc"/></svg></button>
            <button class="tb menu" aria-label="显示表格"><svg><use href="#r-grid"/></svg><svg class="caret"><use href="#i-caret"/></svg></button>
          </div>
          <div class="data">
            <table>
              <thead><tr><th>Time (s)</th><th>温度 (°C), 点: (-40, 0, 15)</th><th></th></tr></thead>
              <tbody>
                <tr><td>0.0000</td><td>20.000</td><td></td></tr>
                <tr><td>1.0000</td><td>21.304</td><td></td></tr>
                <tr><td>2.0000</td><td>27.280</td><td></td></tr>
                <tr><td>3.0000</td><td>34.258</td><td></td></tr>
                <tr><td>4.0000</td><td>39.968</td><td></td></tr>
                <tr><td></td><td></td><td></td></tr>
              </tbody>
            </table>
            <div class="vbar"><svg><use href="#i-up"/></svg><span class="thumb"></span><svg class="down"><use href="#i-up"/></svg></div>
          </div>
        </section>
      </div>
    </div>
  </div>

  <footer class="actions">
    <button><svg><use href="#b-scan"/></svg>提取文字</button>
    <button>更多<svg class="small"><use href="#i-open"/></svg></button>
  </footer>
</body>
</html>
```

FILE: styles.css
```css
:root {
  --blue: #2f5fa5;
  --light-blue: #3f93d2;
  --panel: #f9fbff;
  --line: #dfe1e5;
  --on: #cbe5fa;
}

* {
  box-sizing: border-box;
}

html, body {
  margin: 0;
  padding: 0;
  height: 100%;
}

body {
  display: flex;
  flex-direction: column;
  padding: 21px 9px 0 11px;
  background: #fff;
  color: #1c1c1c;
  font-family: 'Open Sans', 'Noto Sans CJK SC', sans-serif;
  font-size: 8px;
  line-height: 13px;
  overflow: hidden;
}

h2, h3, p, ul {
  margin: 0;
  padding: 0;
  font-weight: 400;
}

button, input, select {
  margin: 0;
  padding: 0;
  border: 0;
  background: none;
  color: inherit;
  font: inherit;
}

svg {
  width: 12px;
  height: 12px;
  flex: none;
}

.sprite {
  display: none;
}

/* frame */
.app {
  flex: 1;
  min-height: 0;
  display: flex;
  flex-direction: column;
  background: #eee;
  overflow: hidden;
}

.ribbon {
  display: grid;
  grid-template-columns: 98fr 83fr 165fr 110fr 53fr 196fr 83fr 63fr 77fr 82fr 40fr;
  height: 9px;
  flex: none;
  background: #fafbfd;
  border-bottom: 1px solid #dcdfe2;
  overflow: hidden;
}

.ribbon span {
  display: flex;
  align-items: flex-end;
  justify-content: center;
  height: 8px;
  line-height: 12px;
  border-right: 1px solid var(--line);
}

.ribbon span:last-child {
  border-right: 0;
}

.workspace {
  flex: 1;
  min-height: 0;
  display: grid;
  grid-template-columns: 197fr 310fr 533fr;
  gap: 5px;
  padding-top: 4px;
}

.panel {
  display: flex;
  flex-direction: column;
  min-width: 0;
  min-height: 0;
  background: var(--panel);
  border-radius: 3px 3px 0 0;
  overflow: hidden;
}

.panel-head {
  display: flex;
  justify-content: space-between;
  height: 21px;
  flex: none;
  padding: 2px 1px 0 5px;
}

.panel-head h2 {
  color: var(--blue);
  font-size: 14px;
  line-height: 20px;
}

.builder h2 {
  color: var(--light-blue);
}

.win {
  display: flex;
  gap: 3px;
  padding-top: 6px;
  color: #a9acb1;
}

.win svg {
  width: 7px;
  height: 7px;
}

.builder .win {
  color: #93c4e8;
}

/* toolbars */
.toolbar {
  display: flex;
  align-items: center;
  height: 14px;
  flex: none;
}

.tb {
  display: flex;
  align-items: center;
  justify-content: center;
  width: 15px;
  height: 13px;
  flex: none;
}

.tb.menu {
  width: 26px;
  gap: 3px;
}

.tb svg {
  width: 11px;
  height: 11px;
}

.tb .caret {
  width: 6px;
  height: 6px;
  margin: 0 1px;
}

.tb.on {
  background: var(--on);
  border-radius: 2px;
}

.sep {
  width: 1px;
  height: 10px;
  margin: 0 3px;
  background: #d3d6da;
}

.builder-bar {
  padding: 0 12px 0 3px;
  justify-content: space-between;
}

.spread {
  justify-content: space-between;
  padding: 0 2px;
}

.spread .sep {
  margin: 0 2px;
}

.second {
  height: 13px;
}

/* model tree */
.filter {
  display: flex;
  align-items: center;
  gap: 4px;
  padding: 3px 3px 4px 4px;
}

.filter input {
  flex: 1;
  min-width: 0;
  height: 14px;
  padding: 0 1px;
  border: 1px solid #d5d8dc;
  background: #fff;
}

.filter input::placeholder {
  color: #999;
}

.tree-box {
  flex: 1;
  min-height: 0;
  display: grid;
  grid-template: minmax(0, 1fr) 7px / minmax(0, 1fr) 11px;
  margin: 0 4px;
  background: #fff;
  border-top: 1px solid #e3e5e8;
}

.tree-view {
  display: flex;
  flex-direction: column;
  overflow: hidden;
  border-left: 1px solid #e3e5e8;
}

/* the last row runs under the horizontal bar */
.tree {
  flex: none;
  height: calc(100% + 4px);
  display: grid;
  grid-auto-rows: 1fr;
  list-style: none;
}

.tree li {
  position: relative;
  display: flex;
  align-items: center;
  min-height: 0;
  white-space: nowrap;
}

.tree li span {
  margin-left: 3px;
}

.tree em {
  font-size: 9px;
}

.tree .chev {
  width: 12px;
  height: 7px;
  flex: none;
}

.tree .shut {
  color: #777;
}

.l1 { padding-left: 13px; }
.l2 { padding-left: 26px; }
.l3 { padding-left: 39px; }

.tree .hover {
  background: #e3f1fd;
}

.tree .selected {
  background: #bfdffa;
  outline: 1px dotted #7a95aa;
  outline-offset: -1px;
}

.mark {
  position: absolute;
  left: 35px;
  top: -2px;
  width: 127px;
  height: 17px;
  border: 1px solid #e4472c;
  border-radius: 4px;
}

.vbar {
  display: flex;
  flex-direction: column;
  align-items: center;
  background: #fbfbfc;
  color: #bbb;
}

.vbar svg, .hbar svg {
  width: 7px;
  height: 7px;
}

.vbar svg {
  margin: 2px 0;
}

.down { transform: rotate(180deg); }
.west { transform: rotate(-90deg); }
.east { transform: rotate(90deg); }

.vbar .thumb {
  width: 100%;
  background: #e5e6e7;
}

.vbar .down {
  margin-top: auto;
}

.tree-box .thumb {
  height: 79%;
}

.hbar {
  display: flex;
  align-items: center;
  gap: 5px;
  padding-left: 3px;
  background: #f5f5f6;
  color: #bbb;
}

.hbar .thumb {
  width: 60%;
  height: 100%;
  background: #e5e6e7;
}

.hbar .east {
  margin-left: auto;
}

/* settings */
.subtitle {
  padding: 0 4px;
  color: var(--blue);
  font-size: 9px;
  line-height: 14px;
}

.form {
  display: grid;
  grid-template-columns: 20px 1fr 15px;
  column-gap: 4px;
  row-gap: 4px;
  align-items: center;
  padding: 8px 3px 4px 3px;
}

.form input {
  min-width: 0;
  height: 14px;
  padding: 0 2px;
  border: 1px solid #dadce0;
  background: #fff;
}

.note {
  background: #ececee;
  border-radius: 2px;
}

.section {
  display: flex;
  align-items: center;
  gap: 6px;
  height: 20px;
  flex: none;
  padding-left: 4px;
  border-top: 1px solid var(--line);
  color: var(--blue);
  font-size: 9px;
}

.section svg {
  width: 7px;
  height: 7px;
}

.section .dark {
  color: #222;
}

.pick {
  display: grid;
  grid-template-columns: 20px 1fr;
  gap: 4px;
  align-items: center;
  padding: 5px 3px 4px 3px;
}

.combo {
  display: grid;
  align-items: center;
}

.combo > * {
  grid-area: 1 / 1;
}

.combo select {
  width: 100%;
  height: 14px;
  padding: 0 20px 0 20px;
  appearance: none;
  background: #ececed;
  border: 1px solid #dcdde0;
  border-radius: 2px;
}

.combo svg {
  z-index: 1;
  pointer-events: none;
}

.combo .lead {
  width: 11px;
  height: 11px;
  margin-left: 9px;
}

.combo .caret {
  width: 6px;
  height: 6px;
  margin-right: 4px;
  justify-self: end;
}

.edges {
  display: flex;
  align-items: flex-start;
  padding: 0 2px 7px 3px;
}

.switch {
  display: flex;
  align-items: center;
  justify-content: center;
  width: 26px;
  height: 26px;
  background: #cce6fb;
  border: 1px solid #a9cfee;
}

.switch svg {
  width: 21px;
  height: 14px;
}

.listbox {
  flex: 1;
  display: flex;
  height: 79px;
  margin: 0 5px 0 4px;
  border: 1px solid #dcdee1;
  border-bottom: 2px solid #d0d2d4;
}

.listbox select {
  flex: 1;
  min-width: 0;
  height: 76px;
  padding-top: 1px;
  overflow: hidden;
  outline: 0;
  scrollbar-width: none;
}

.listbox option {
  min-height: 14px;
  padding: 0 4px;
  line-height: 14px;
}

.listbox .vbar {
  width: 12px;
}

.listbox .thumb {
  height: 29px;
}

.edge-tools {
  display: grid;
  grid-template-columns: 15px 15px;
  column-gap: 4px;
}

.units {
  display: grid;
  grid-template-columns: 1fr 15px;
  gap: 3px 7px;
  padding: 5px 2px 6px 3px;
}

.units table {
  width: 100%;
  table-layout: fixed;
  border-collapse: collapse;
  border: 1px solid #cfd0d2;
  border-right: 2px solid #c4c5c7;
  border-bottom: 2px solid #c4c5c7;
}

.units th {
  position: relative;
  height: 19px;
  padding: 5px 4px 0;
  background: #efefef;
  font-weight: 400;
  text-align: left;
}

.units th:first-child {
  width: 67%;
  padding-left: 12px;
}

.units th svg {
  position: absolute;
  left: 2px;
  top: 2px;
  width: 7px;
  height: 6px;
}

.units td {
  height: 13px;
  padding: 0 2px;
  background: #f4f4f5;
}

.units th + th, .units td + td {
  border-left: 1px solid #c4c5c7;
}

.units td + td {
  font-size: 9px;
}

.units .edit {
  background: #fff;
}

.unit-tools {
  padding-top: 4px;
}

/* graphics and results */
.right {
  display: grid;
  grid-template-rows: minmax(0, 283fr) minmax(0, 128fr);
  gap: 4px;
  min-width: 0;
  min-height: 0;
  padding-right: 1px;
}

.graphics {
  background: linear-gradient(#f9fbff 25%, #e3f0fe);
}

.graphics .win {
  padding-right: 1px;
}

.scene {
  width: 100%;
  height: auto;
  flex: 1;
  min-height: 0;
}

.grid {
  fill: none;
  stroke: #8f9296;
  stroke-width: 0.8px;
}

.edge {
  fill: none;
  stroke: #1a1a1a;
  stroke-width: 0.8px;
}

.dots {
  stroke: #000;
  stroke-width: 2px;
  stroke-linecap: square;
}

.scan {
  fill: none;
  stroke: #0a0ae8;
  stroke-width: 1.5px;
}

.callout {
  fill: none;
  stroke: #ea4a30;
}

.ticks {
  font-family: 'DejaVu Sans', sans-serif;
  font-size: 8px;
  text-anchor: middle;
  fill: #222;
}

.tabs {
  display: flex;
  height: 23px;
  flex: none;
  padding: 0 2px 0 7px;
  gap: 17px;
  border-bottom: 1px solid var(--line);
}

.tab {
  color: #444;
  font-size: 9px;
}

.tab.active {
  margin: 0 -2px;
  padding: 0 2px;
  color: var(--blue);
  border-bottom: 2px solid var(--light-blue);
}

.tab span {
  margin-left: 2px;
  color: #b5b8bc;
  font-size: 10px;
}

.tabs .win {
  margin-left: auto;
  padding-top: 8px;
}

.table-bar {
  height: 17px;
  padding-left: 2px;
}

.num {
  color: #3b8fce;
  font-size: 6px;
  line-height: 6px;
}

.auto {
  font-size: 5px;
}

.data {
  flex: 1;
  min-height: 0;
  display: flex;
  align-items: stretch;
  margin: 0 3px 0 2px;
  overflow: hidden;
  border: 1px solid #e3e5e8;
  border-width: 1px 1px 0;
  background: #fdfdff;
}

.data table {
  flex: 1;
  align-self: flex-start;
  border-collapse: collapse;
}

.data th, .data td {
  padding: 0 1px;
  height: 13px;
  line-height: 12px;
  text-align: left;
  font-weight: 400;
  white-space: nowrap;
  border-right: 1px solid #b9bbbd;
  border-bottom: 1px solid #c5c7c9;
}

.data td {
  font-size: 9px;
}

.data th {
  height: 19px;
  padding: 2px 4px 0;
  background: #eee;
  border-bottom: 0;
}

.data th:first-child {
  padding-right: 3px;
}

.data th:last-child {
  width: 100%;
}

.data td:last-child {
  border-right: 0;
}

.data .vbar {
  width: 11px;
  padding-top: 18px;
}

.data .thumb {
  height: 5px;
  flex: none;
}

.actions {
  display: flex;
  justify-content: flex-end;
  gap: 8px;
  padding-top: 7px;
}

.actions button {
  display: flex;
  align-items: center;
  gap: 5px;
  height: 24px;
  padding: 0 5px;
  border: 1px solid #dcdfe3;
  border-radius: 4px;
  background: #fff;
  color: #111;
  font-size: 12px;
}

.actions svg {
  width: 14px;
  height: 14px;
}

.actions .small {
  width: 7px;
  height: 7px;
}
```
